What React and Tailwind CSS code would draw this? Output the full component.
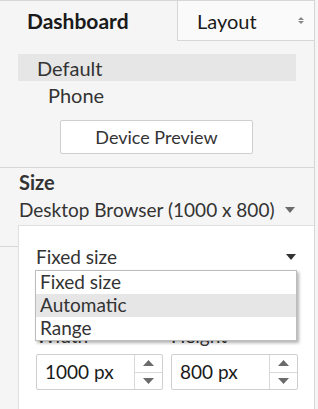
import { useState } from "react";

const Caret = ({ className }) => (
  <svg width="10" height="6" viewBox="0 0 10 6" className={className}>
    <path d="M0 0h10L5 6z" fill="currentColor" />
  </svg>
);

const Spinner = () => (
  <div className="flex w-[28px] flex-col border-l border-[#d9d9d9]">
    <div className="flex flex-1 items-center justify-center border-b border-[#d9d9d9]">
      <svg width="11" height="6" viewBox="0 0 11 6">
        <path d="M0 6h11L5.5 0z" fill="#6b6b6b" />
      </svg>
    </div>
    <div className="flex flex-1 items-center justify-center">
      <svg width="11" height="6" viewBox="0 0 11 6">
        <path d="M0 0h11L5.5 6z" fill="#6b6b6b" />
      </svg>
    </div>
  </div>
);

const NumberBox = ({ value }) => (
  <div className="flex h-[36px] w-[127px] rounded-[2px] border border-[#cfcfcf] bg-white">
    <div className="flex flex-1 items-center pl-[8px] text-[19px] text-[#1a1a1a]">{value}</div>
    <Spinner />
  </div>
);

export default function App() {
  const [selected] = useState("Automatic");
  const options = ["Fixed size", "Automatic", "Range"];

  return (
    <div
      className="relative h-[409px] w-[318px] overflow-hidden bg-[#f5f5f5] text-[#333]"
      style={{ fontFamily: "Lato, 'Open Sans', sans-serif" }}
    >
      <div className="h-full w-[315px] border-r border-t border-[#d6d6d6]">
        {/* Tabs */}
        <div className="flex h-[40px]">
          <div className="flex w-[177px] items-center pl-[27px] text-[21px] font-bold text-[#1a1a1a]">
            Dashboard
          </div>
          <div className="relative flex flex-1 items-center border-b border-l border-[#d6d6d6] bg-[#fafafa] pl-[19px] text-[20px] text-[#1a1a1a]">
            Layout
            <div className="absolute right-[10px] top-[16px] flex flex-col gap-[1px]">
              <svg width="6" height="3" viewBox="0 0 6 3">
                <path d="M0 3h6L3 0z" fill="#888" />
              </svg>
              <svg width="6" height="3" viewBox="0 0 6 3">
                <path d="M0 0h6L3 3z" fill="#888" />
              </svg>
            </div>
          </div>
        </div>

        {/* Device list */}
        <div className="px-[18px] pt-[13px]">
          <div className="flex h-[27px] w-[278px] items-center bg-[#e6e6e6] pl-[19px] text-[20px]">
            Default
          </div>
          <div className="flex h-[27px] items-center pl-[30px] text-[20px]">Phone</div>
          <div className="ml-[42px] mt-[12px] flex h-[34px] w-[193px] items-center justify-center rounded-[2px] border border-[#cfcfcf] bg-white text-[18px]">
            Device Preview
          </div>
        </div>

        <div className="mt-[13px] border-t border-[#d6d6d6]" />

        {/* Size */}
        <div className="pl-[19px] pt-[2px]">
          <div className="text-[20px] font-bold leading-[24px] text-[#333]">Size</div>
          <div className="mt-[5px] flex items-center text-[19px] leading-[22px]">
            <span>Desktop Browser (1000 x 800)</span>
            <Caret className="ml-[11px] text-[#6b6b6b]" />
          </div>
        </div>

        <div className="relative mt-[4px] flex">
          <div className="w-[18px] pt-[21px]">
            <div className="border-t border-[#d6d6d6]" />
          </div>
          <div className="relative h-[200px] flex-1 border-l border-t border-[#e0e0e0] bg-white pl-[17px] pt-[19px]">
            <div className="flex items-center text-[19px] leading-[24px]">
              <span className="flex-1">Fixed size</span>
              <Caret className="mr-[18px] text-[#333]" />
            </div>

            <div className="mt-[57px] flex gap-[8px] text-[19px] leading-[20px]">
              <div className="w-[127px]">Width</div>
              <div className="w-[127px]">Height</div>
            </div>
            <div className="mt-[8px] flex gap-[8px]">
              <NumberBox value="1000 px" />
              <NumberBox value="800 px" />
            </div>

            {/* Open dropdown list */}
            <div className="absolute left-[16px] top-[44px] w-[262px] border border-[#bdbdbd] bg-white shadow-[2px_2px_3px_rgba(0,0,0,0.3)]">
              {options.map((o) => (
                <div
                  key={o}
                  className={`flex h-[23px] items-center pl-[4px] text-[19px] ${
                    o === selected ? "bg-[#e6e6e6]" : ""
                  }`}
                >
                  {o}
                </div>
              ))}
            </div>
          </div>
        </div>
      </div>
    </div>
  );
}
